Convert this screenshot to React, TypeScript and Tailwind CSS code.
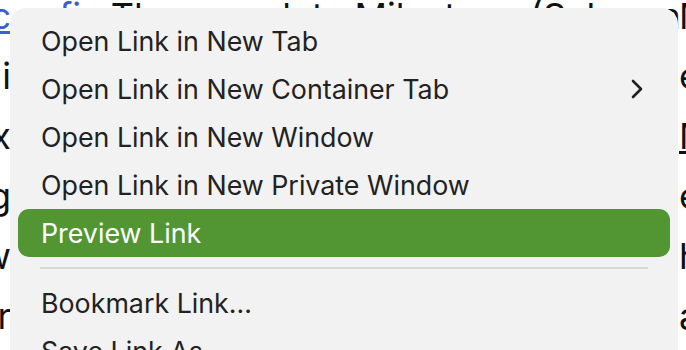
const items = [
  { label: "Open Link in New Tab" },
  { label: "Open Link in New Container Tab", submenu: true },
  { label: "Open Link in New Window" },
  { label: "Open Link in New Private Window" },
  { label: "Preview Link", active: true },
];

// page text peeking out around the menu: [left tail, middle, right head]
const rows = [
  { left: "doc", link: true, mid: "fix  The complete Milestone (Schema) in", right: "Ma" },
  { left: "ni", mid: "", right: "ea" },
  { left: "ex", mid: "", right: "Mo", underline: true },
  { left: "ng", mid: "", right: "ea" },
  { left: "ew", mid: "", right: "ho" },
  { left: "er", mid: "", right: "as" },
];

function MenuItem({ label, submenu, active }: { label: string; submenu?: boolean; active?: boolean }) {
  return (
    <div
      className={
        active
          ? "mx-2 flex h-12 items-center justify-between rounded-[11px] bg-[#529633] pl-[23px] pr-[27px] text-white"
          : "mx-2 flex h-12 items-center justify-between rounded-[11px] pl-[23px] pr-[27px] text-[#222222]"
      }
    >
      <span>{label}</span>
      {submenu && (
        <svg width="12" height="20" viewBox="0 0 12 20" fill="none" className="shrink-0">
          <path d="M2 2 L10 10 L2 18" stroke="#222222" strokeWidth="2.6" strokeLinecap="round" strokeLinejoin="round" />
        </svg>
      )}
    </div>
  );
}

export default function App() {
  return (
    <div className="relative h-[350px] w-[686px] overflow-hidden bg-white font-['Inter','Noto_Sans',sans-serif]">
      {/* page text behind the menu */}
      <div className="-mt-[14px] flex flex-col text-[36px] leading-[60px] text-[#111111]">
        {rows.map((r, i) => (
          <div key={i} className="flex h-[60px] whitespace-nowrap">
            <div className="flex w-[11px] shrink-0 justify-end">
              <span className={r.link ? "text-[#3b5fce] underline" : ""}>{r.left}</span>
            </div>
            <div className="min-w-0 flex-1 overflow-hidden pl-[48px]">
              {r.link && <span className="text-[#3b5fce]">fix </span>}
              {r.link && <span> The complete Milestone (Schema) in</span>}
            </div>
            <div className="w-[7px] shrink-0">
              <span className={r.underline ? "underline" : ""}>{r.right}</span>
            </div>
          </div>
        ))}
      </div>

      {/* context menu */}
      <div className="absolute left-[10px] top-[8px] w-[668px] rounded-[16px] bg-[#f2f2f2] pt-[9px] text-[26.8px]">
        {items.map((it) => (
          <MenuItem key={it.label} {...it} />
        ))}
        <div className="flex h-[22px] items-center px-[30px]">
          <div className="h-[2px] w-full bg-[#d9d9d9]" />
        </div>
        <MenuItem label="Bookmark Link…" />
        <MenuItem label="Save Link As…" />
      </div>
    </div>
  );
}
